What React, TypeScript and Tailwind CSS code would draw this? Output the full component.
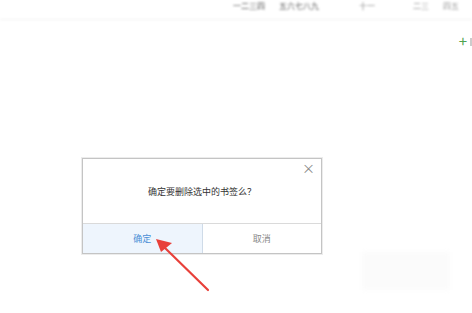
const font = { fontFamily: '"Noto Sans CJK SC", "Liberation Sans", sans-serif' };

export default function App() {
  return (
    <div className="relative w-[472px] h-[313px] overflow-hidden bg-white" style={font}>
      {/* top bar with blurred menu text */}
      <div className="h-[20px] border-b border-[#f2f2f2] flex items-start pt-[1px] pl-[233px] text-[8px] leading-[10px] text-[#555] blur-[0.8px] whitespace-nowrap">
        <span className="w-[42px]">一二三四</span>
        <span className="w-[70px] ml-[4px]">五六七八九</span>
        <span className="w-[30px] ml-[10px] text-[#888]">十一</span>
        <span className="w-[28px] ml-[24px] text-[#999]">二三</span>
        <span className="ml-[2px] text-[#999]">四五</span>
      </div>

      <div className="flex justify-end pt-[15px] h-[30px]">
        <span className="text-[#4fa34f] text-[15px] leading-[12px] mr-[3px]">+</span>
        <span className="w-[2px] h-[8px] mt-[3px] bg-[#ccc]" />
      </div>

      {/* dialog */}
      <div className="ml-[82px] mt-[108px] w-[240px] h-[96px] border border-[#c4c4c4] bg-white shadow-[0_0_0_1px_#ececec] flex flex-col">
        <div className="relative flex-1 flex items-center justify-center pt-[1px]">
          <span className="text-[9px] leading-none text-[#333]">确定要删除选中的书签么？</span>
          <span className="absolute right-[6px] top-[2px] text-[#888] text-[13px] leading-none">×</span>
        </div>
        <div className="h-[30px] flex border-t border-[#dadada]">
          <button className="flex-1 bg-[#eef5fd] border-r border-[#cfdbe8] text-[#4a8fd6] text-[9px] flex items-center justify-center">
            确定
          </button>
          <button className="flex-1 bg-white text-[#888] text-[9px] flex items-center justify-center">
            取消
          </button>
        </div>
      </div>

      {/* faint smudge bottom right */}
      <div className="absolute left-[362px] top-[252px] w-[88px] h-[38px] bg-[#fbfbfb] blur-[2px]" />

      {/* red arrow */}
      <svg className="absolute left-0 top-0" width="472" height="313" viewBox="0 0 472 313">
        <line x1="208" y1="290" x2="164" y2="247" stroke="#e8403a" strokeWidth="2.2" strokeLinecap="round" />
        <polygon points="156,239 172,243 161,252" fill="#e8403a" />
      </svg>
    </div>
  );
}
